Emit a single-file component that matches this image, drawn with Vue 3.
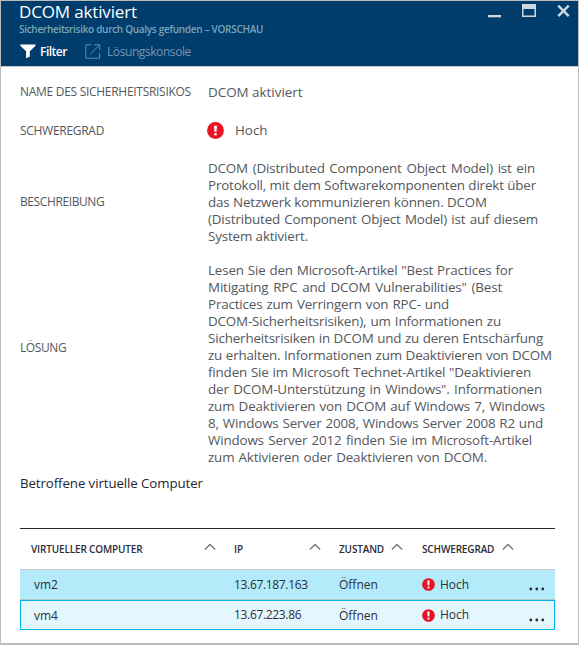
<script setup>
const description = [
  ['DCOM (Distributed Component Object Model) ist ein', 327],
  ['Protokoll, mit dem Softwarekomponenten direkt über', 328],
  ['das Netzwerk kommunizieren können. DCOM', 279],
  ['(Distributed Component Object Model) ist auf diesem', 330],
  ['System aktiviert.', 100],
]
const solution = [
  ['Lesen Sie den Microsoft-Artikel "Best Practices for', 305],
  ['Mitigating RPC and DCOM Vulnerabilities" (Best', 294],
  ['Practices zum Verringern von RPC- und', 241],
  ['DCOM-Sicherheitsrisiken), um Informationen zu', 293],
  ['Sicherheitsrisiken in DCOM und zu deren Entschärfung', 335],
  ['zu erhalten. Informationen zum Deaktivieren von DCOM', 344],
  ['finden Sie im Microsoft Technet-Artikel "Deaktivieren', 323],
  ['der DCOM-Unterstützung in Windows". Informationen', 334],
  ['zum Deaktivieren von DCOM auf Windows 7, Windows', 337],
  ['8, Windows Server 2008, Windows Server 2008 R2 und', 335],
  ['Windows Server 2012 finden Sie im Microsoft-Artikel', 324],
  ['zum Aktivieren oder Deaktivieren von DCOM.', 279],
]
const columns = [
  { key: 'name', label: 'VIRTUELLER COMPUTER' },
  { key: 'ip', label: 'IP' },
  { key: 'state', label: 'ZUSTAND' },
  { key: 'level', label: 'SCHWEREGRAD' },
]
const machines = [
  { name: 'vm2', ip: '13.67.187.163', state: 'Öffnen', severity: 'Hoch' },
  { name: 'vm4', ip: '13.67.223.86', state: 'Öffnen', severity: 'Hoch' },
]
</script>

<template>
  <main class="blade">
    <header class="top">
      <div class="titles">
        <h1>DCOM aktiviert</h1>
        <p class="subtitle">Sicherheitsrisiko durch Qualys gefunden – VORSCHAU</p>
        <nav class="tools">
          <svg class="funnel" width="16" height="15" viewBox="0 0 16 15"><path d="M.3.5h15.200v1.200L9.800 7.200v5.200l-3.700 1.900V7.200L.3 1.700z" fill="#fff" /></svg>
          <span class="filter">Filter</span>
          <svg class="open" width="16" height="15" viewBox="0 0 16 15" fill="none" stroke="#6489a8" stroke-width="1"><path d="M6 .8H.8v13.400h13.700V9M4.800 10.500 14.300 1.300M9 .8h5.700v5.200" /></svg>
          <span class="console">Lösungskonsole</span>
        </nav>
      </div>
      <div class="controls">
        <svg width="82" height="16" viewBox="0 0 82 16">
          <path d="M0 12h13v2.300H0z" fill="#ccd8e2" />
          <path d="M34 1h14v13H34zM35.500 6v6.500h11V6z" fill="#ccd8e2" fill-rule="evenodd" />
          <path d="m70.300 2.700 10.400 10.400M80.700 2.700 70.300 13.100" stroke="#ccd8e2" stroke-width="2.400" />
        </svg>
      </div>
    </header>

    <dl class="details">
      <dt>NAME DES SICHERHEITSRISIKOS</dt>
      <dd>DCOM aktiviert</dd>
      <dt>SCHWEREGRAD</dt>
      <dd class="severity">
        <svg width="17" height="17" viewBox="0 0 17 17"><circle cx="8.500" cy="8.500" r="8.400" fill="#ea1225" /><path d="M7 3.800h3l-.5 6h-2z" fill="#fff" /><circle cx="8.500" cy="12.300" r="1.300" fill="#fff" /></svg>
        <span>Hoch</span>
      </dd>
      <dt class="l-desc">BESCHREIBUNG</dt>
      <dd><span v-for="[text, width] in description" :key="text" class="line" :style="{ width: width + 'px' }">{{ text }}</span></dd>
      <dt class="l-sol">LÖSUNG</dt>
      <dd><span v-for="[text, width] in solution" :key="text" class="line" :style="{ width: width + 'px' }">{{ text }}</span></dd>
    </dl>

    <h2>Betroffene virtuelle Computer</h2>

    <section class="table">
      <div class="row head">
        <div v-for="c in columns" :key="c.key" class="cell" :class="c.key">
          <span>{{ c.label }}</span>
          <svg width="12" height="8" viewBox="0 0 12 8" fill="none" stroke="#70757b" stroke-width="1.300"><path d="m.8 6.500 5.200-5 5.200 5" /></svg>
        </div>
      </div>
      <div v-for="(m, i) in machines" :key="m.name" class="row" :class="i ? 'focused' : 'selected'">
        <span class="cell name">{{ m.name }}</span>
        <span class="cell ip">{{ m.ip }}</span>
        <span class="cell state">{{ m.state }}</span>
        <span class="cell level">
          <svg width="13" height="13" viewBox="0 0 17 17"><circle cx="8.500" cy="8.500" r="8.300" fill="#ea1225" /><path d="M7 3.300h3l-.5 6.500h-2z" fill="#fff" /><circle cx="8.500" cy="12.500" r="1.500" fill="#fff" /></svg>
          <span class="level-text">{{ m.severity }}</span>
        </span>
        <svg class="more" width="16" height="4" viewBox="0 0 16 4" fill="#2b2d35"><circle cx="1.800" cy="2" r="1.400" /><circle cx="7.800" cy="2" r="1.400" /><circle cx="13.800" cy="2" r="1.400" /></svg>
      </div>
    </section>
  </main>
</template>

<style>
body { background: #fff; }
</style>

<style scoped>
* { box-sizing: border-box; margin: 0; }
.blade {
  width: 579px;
  height: 645px;
  border: 1px solid #bdbdbd;
  border-bottom-width: 2px;
  background: #fff;
  font-family: "Open Sans", "Noto Sans", sans-serif;
  font-size: 13.400px;
  color: #54575c;
  white-space: nowrap;
}
.top {
  display: flex;
  justify-content: space-between;
  height: 66px;
  padding: 0 8px 0 18px;
  background: #003c6c;
  border-bottom: 1px solid #c3c8cd;
  color: #fff;
}
h1 { height: 21px; font-size: 17px; line-height: 22px; font-weight: 400; letter-spacing: -0.15px; }
.subtitle { height: 15px; line-height: 15px; font-size: 10px; font-weight: 600; color: #78a7bb; letter-spacing: -0.3px; }
.tools { display: flex; align-items: center; height: 29px; font-size: 12px; line-height: 18px; }
.funnel { margin-left: 1px; }
.filter { width: 45px; margin-left: 4px; font-weight: 600; letter-spacing: -0.5px; }
.open { margin-right: 6px; }
.console { color: #7896b1; letter-spacing: -0.42px; }
.controls { padding-top: 2px; }
.controls svg { display: block; }
.details {
  display: grid;
  grid-template-columns: 188px 1fr;
  grid-template-rows: 38px 38px 102px 213px;
  padding: 17px 0 0 19px;
  line-height: 17px;
}
dt { font-size: 12px; letter-spacing: -0.29px; }
dt:first-of-type { margin-top: -1px; }
.l-desc { padding-top: 33px; letter-spacing: -0.4px; }
.l-sol { padding-top: 77px; letter-spacing: -0.4px; }
.severity { display: flex; gap: 11px; margin-left: -1px; }
.line { display: block; text-align-last: justify; letter-spacing: -0.16px; }
h2 { height: 53px; padding-left: 19px; font-size: 13.300px; font-weight: 400; line-height: 17px; letter-spacing: -0.1px; color: #25262e; }
.table { width: 535px; margin-left: 19px; border-top: 1px solid #25262e; color: #2b2d38; }
.row { display: grid; grid-template-columns: 214px 105px 83px 105px 1fr; align-items: center; height: 30px; font-size: 12px; }
.cell { display: flex; align-items: center; }
.name { padding-left: 14px; }
.level { gap: 5px; }
.ip { letter-spacing: -0.33px; }
.head { height: 40px; font-size: 10px; font-weight: 600; }
.head .cell { justify-content: space-between; padding-right: 18px; letter-spacing: -0.15px; }
.head .cell svg { flex: none; margin-top: -5px; }
.head .name { padding-left: 11px; }
.head .state { padding-right: 19px; }
.head .level { padding-right: 13px; }
.more { margin: 9px 0 0 2px; }
.selected { height: 31px; background: #b3ebfa; border-top: 1px solid #c5c9c8; border-bottom: 1px solid #b7c8cc; }
.focused { background: #e5f7fe; outline: 1px solid #00b4ee; outline-offset: -1px; }
.focused .ip, .focused .level-text { padding-bottom: 2px; }
</style>
